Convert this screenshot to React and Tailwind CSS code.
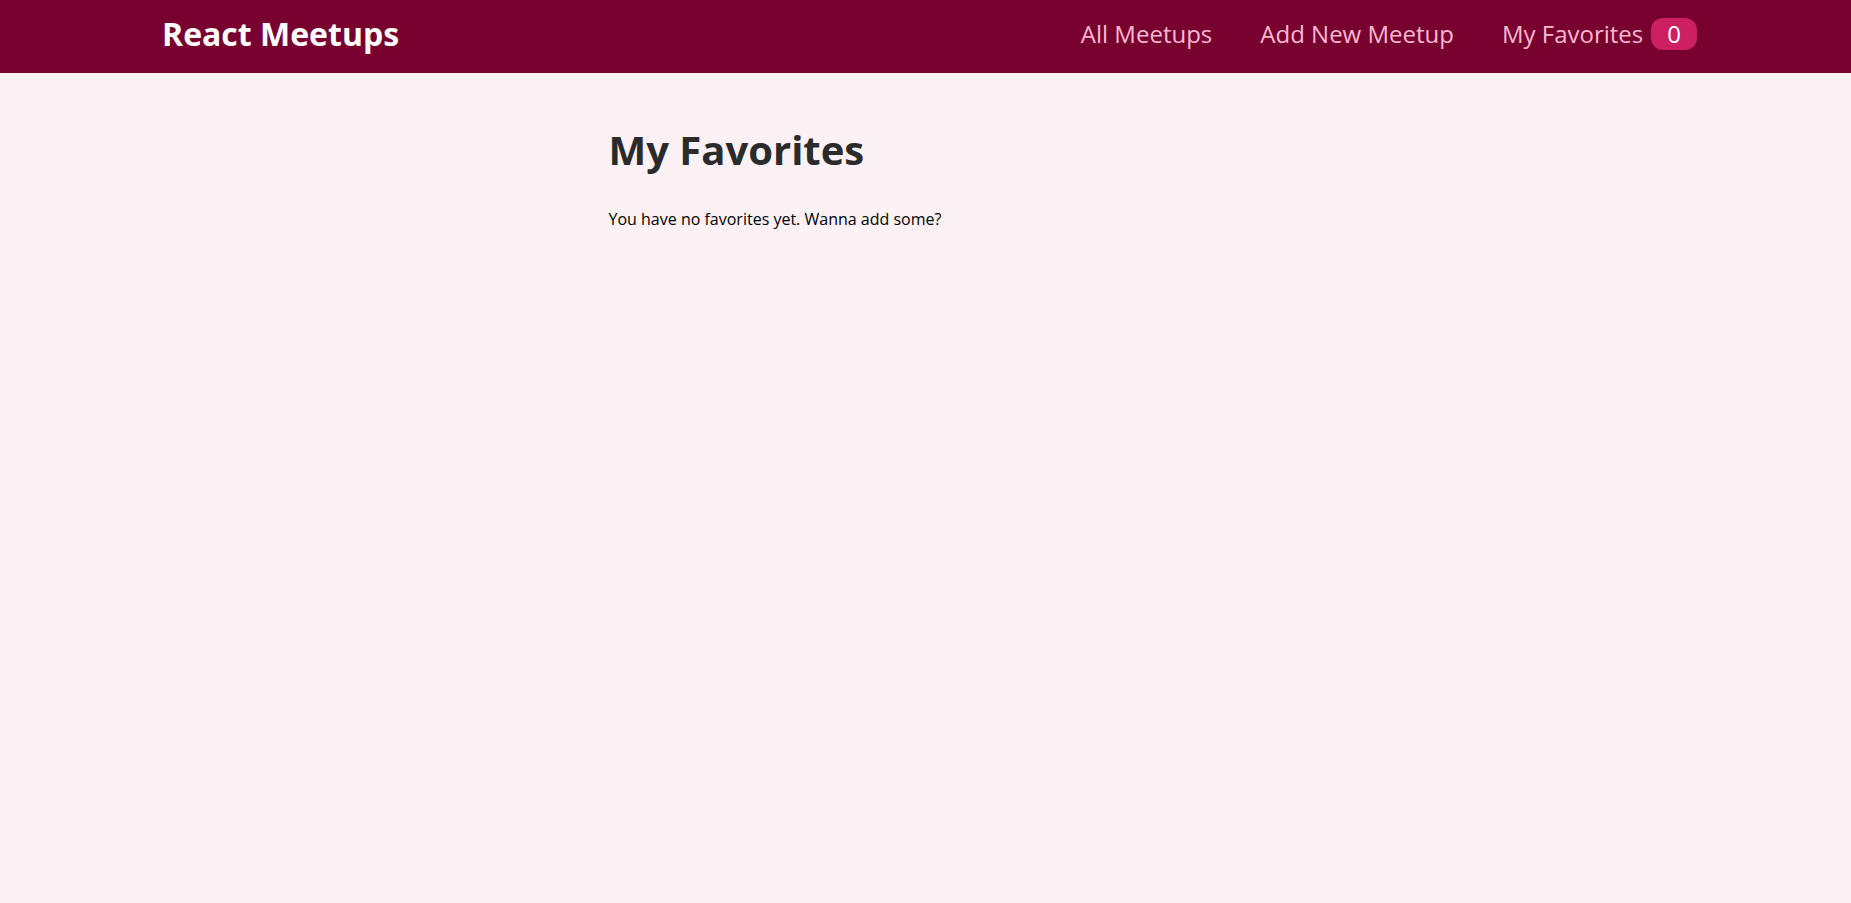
import React from "react";

export default function App() {
  const favorites = [];

  return (
    <div className="min-h-screen bg-[#fcf2f6] font-['Open_Sans',sans-serif]">
      <header className="h-[73px] bg-[#77002e] flex items-center justify-between pl-[162px] pr-[154px] pb-[5px]">
        <div className="text-[32px] font-bold text-white leading-none">React Meetups</div>
        <nav>
          <ul className="flex items-center gap-12 list-none m-0 p-0">
            <li>
              <a href="#" className="text-2xl text-[#fcb8d2] no-underline">All Meetups</a>
            </li>
            <li>
              <a href="#" className="text-2xl text-[#fcb8d2] no-underline">Add New Meetup</a>
            </li>
            <li>
              <a href="#" className="text-2xl leading-[1.362] text-[#fcb8d2] no-underline flex items-center">
                My Favorites
                <span className="ml-2 px-4 rounded-xl bg-[#cc2062] text-white">
                  {favorites.length}
                </span>
              </a>
            </li>
          </ul>
        </nav>
      </header>

      <main className="w-[634px] mx-auto pt-[50px]">
        <h1 className="text-[40px] font-bold text-[#2b2b2b] leading-[1.362]">My Favorites</h1>
        <p className="mt-8 text-base text-black leading-[1.362]">
          You have no favorites yet. Wanna add some?
        </p>
      </main>
    </div>
  );
}
